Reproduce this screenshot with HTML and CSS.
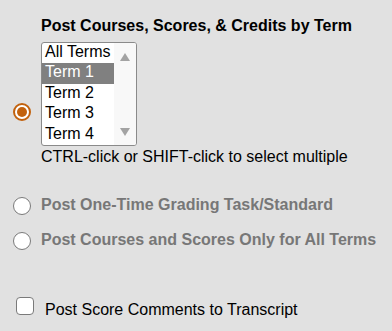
FILE: index.html
```html
<!DOCTYPE html>
<html lang="en">
<head>
    <meta charset="UTF-8">
    <title>Post Grades</title>
    <link rel="stylesheet" href="styles.css">
</head>
<body>
    <div id="options">
        <div class="option option-term">
            <span class="radio checked"></span>
            <div class="term-body">
                <div class="term-title">Post Courses, Scores, &amp; Credits by Term</div>
                <div class="listbox">
                    <div class="list-items">
                        <div class="list-item">All Terms</div>
                        <div class="list-item selected">Term 1</div>
                        <div class="list-item">Term 2</div>
                        <div class="list-item">Term 3</div>
                        <div class="list-item">Term 4</div>
                    </div>
                    <div class="scrollbar">
                        <span class="arrow up"></span>
                        <span class="arrow down"></span>
                    </div>
                </div>
                <div class="hint">CTRL-click or SHIFT-click to select multiple</div>
            </div>
        </div>

        <div class="option option-simple first">
            <span class="radio"></span>
            <span class="label-disabled">Post One-Time Grading Task/Standard</span>
        </div>

        <div class="option option-simple">
            <span class="radio"></span>
            <span class="label-disabled">Post Courses and Scores Only for All Terms</span>
        </div>

        <div class="check-row">
            <span class="checkbox"></span>
            <span class="check-label">Post Score Comments to Transcript</span>
        </div>
    </div>
</body>
</html>
```

FILE: styles.css
```css
body {
    font-family: 'Liberation Sans', Arial, sans-serif;
    font-size: 16px;
    background-color: #e1e1e1;
    margin: 0;
    padding: 17px 0 0 0;
    color: #000;
}
.option {
    display: flex;
}
.radio {
    flex: none;
    box-sizing: border-box;
    width: 18px;
    height: 18px;
    margin-left: 13px;
    margin-right: 10px;
    border: 1.5px solid #7a7a7a;
    border-radius: 50%;
    background-color: #fff;
}
.radio.checked {
    border: 2px solid #c2620e;
    position: relative;
}
.radio.checked::after {
    content: "";
    position: absolute;
    left: 2px;
    top: 2px;
    width: 10px;
    height: 10px;
    border-radius: 50%;
    background-color: #c2620e;
}
.option-term {
    align-items: flex-start;
}
.option-term .radio {
    margin-top: 86px;
}
.term-title {
    font-weight: bold;
    line-height: 18px;
}
.listbox {
    box-sizing: border-box;
    display: flex;
    width: 96px;
    height: 104px;
    margin-top: 7px;
    border: 1px solid #8a8a8a;
    border-radius: 3px;
    background-color: #fff;
    overflow: hidden;
}
.list-items {
    width: 72px;
}
.list-item {
    height: 20.4px;
    line-height: 18px;
    padding-left: 3px;
    white-space: nowrap;
}
.list-item.selected {
    background-color: #808080;
    color: #fff;
}
.scrollbar {
    flex: 1;
    background-color: #f8f8f8;
    display: flex;
    flex-direction: column;
    justify-content: space-between;
    align-items: center;
    padding: 10px 0 9px 0;
}
.arrow {
    width: 0;
    height: 0;
    border-left: 5.5px solid transparent;
    border-right: 5.5px solid transparent;
}
.arrow.up {
    border-bottom: 8px solid #a3a3a3;
}
.arrow.down {
    border-top: 8px solid #a3a3a3;
}
.hint {
    margin-top: 2px;
    line-height: 18px;
}
.option-simple {
    align-items: center;
    margin-top: 15px;
}
.option-simple.first {
    margin-top: 29px;
}
.option-simple .radio {
    margin-top: 2px;
}
.label-disabled {
    font-weight: bold;
    color: #777;
    line-height: 18px;
}
.check-row {
    display: flex;
    align-items: flex-start;
    margin-top: 47px;
}
.checkbox {
    flex: none;
    box-sizing: border-box;
    width: 18px;
    height: 18px;
    margin-left: 16px;
    margin-right: 11px;
    border: 1.5px solid #7a7a7a;
    border-radius: 4px;
    background-color: #fff;
}
.check-label {
    margin-top: 4px;
    line-height: 18px;
}
```
